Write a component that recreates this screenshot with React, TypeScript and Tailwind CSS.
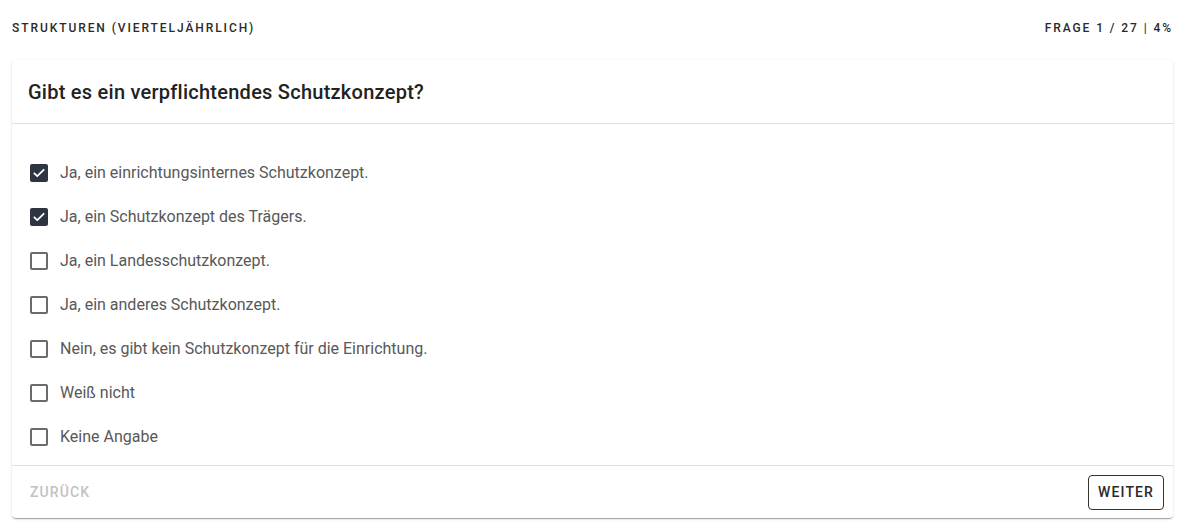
import { useState } from "react";

const options = [
  "Ja, ein einrichtungsinternes Schutzkonzept.",
  "Ja, ein Schutzkonzept des Trägers.",
  "Ja, ein Landesschutzkonzept.",
  "Ja, ein anderes Schutzkonzept.",
  "Nein, es gibt kein Schutzkonzept für die Einrichtung.",
  "Weiß nicht",
  "Keine Angabe",
];

function Box({ checked }: { checked: boolean }) {
  if (checked) {
    return (
      <span className="w-[18px] h-[18px] rounded-[2px] bg-[#2f3443] flex items-center justify-center flex-shrink-0">
        <svg width="14" height="14" viewBox="0 0 24 24" fill="none">
          <path d="M4 12.5l5 5L20 6.5" stroke="#fff" strokeWidth="3" strokeLinecap="round" strokeLinejoin="round" />
        </svg>
      </span>
    );
  }
  return <span className="w-[18px] h-[18px] rounded-[2px] border-2 border-[#6b6b6b] flex-shrink-0" />;
}

export default function App() {
  const [checked, setChecked] = useState<boolean[]>([true, true, false, false, false, false, false]);

  const toggle = (i: number) => setChecked((prev) => prev.map((c, j) => (j === i ? !c : c)));

  return (
    <div className="min-h-screen w-full bg-white px-3 pt-[20px] font-['Roboto',sans-serif]">
      {/* Top line */}
      <div className="flex items-center justify-between h-[16px] text-[12px] font-medium tracking-[0.16em] text-[#2a2a2a]">
        <span>STRUKTUREN (VIERTELJÄHRLICH)</span>
        <span>FRAGE 1 / 27 | 4%</span>
      </div>

      {/* Card */}
      <div className="mt-[24px] rounded bg-white shadow-[0_2px_1px_-1px_rgba(0,0,0,0.2),0_1px_1px_0_rgba(0,0,0,0.14),0_1px_3px_0_rgba(0,0,0,0.12)]">
        <div className="h-[64px] px-4 flex items-center border-b border-[#e0e0e0]">
          <h1 className="text-[20px] font-medium tracking-[0.25px] text-[#222]">Gibt es ein verpflichtendes Schutzkonzept?</h1>
        </div>

        <div className="pt-[27px] pb-[6px] px-[18px]">
          {options.map((o, i) => (
            <label key={o} onClick={() => toggle(i)} className="h-[44px] flex items-center gap-3 cursor-pointer">
              <Box checked={checked[i]} />
              <span className="text-[16px] text-[#585858]">{o}</span>
            </label>
          ))}
        </div>

        <div className="h-[53px] border-t border-[#e0e0e0] flex items-center justify-between pl-[18px] pr-[9px]">
          <button disabled className="text-[14px] font-medium tracking-[0.08em] text-[#c2c2c2]">ZURÜCK</button>
          <button className="h-[35px] px-[9px] rounded border border-[#333] text-[14px] font-medium tracking-[0.08em] text-[#2a2a2a]">
            WEITER
          </button>
        </div>
      </div>
    </div>
  );
}
